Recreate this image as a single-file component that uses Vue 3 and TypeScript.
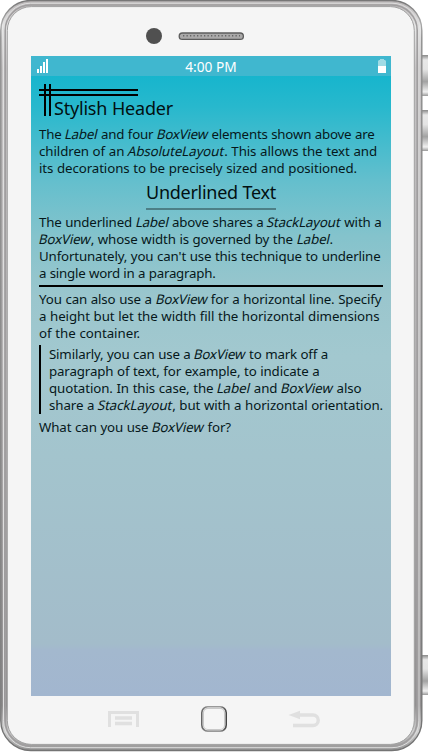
<script setup lang="ts">
import { nextTick, onMounted, ref } from 'vue'

interface Line { text: string; width: number }

// Words between asterisks are type names and are set slanted.
const intro: Line[] = [
  { text: 'The *Label* and four *BoxView* elements shown above are', width: 335.5 },
  { text: 'children of an *AbsoluteLayout*. This allows the text and', width: 338 },
  { text: 'its decorations to be precisely sized and positioned.', width: 318 },
]
const underline: Line[] = [
  { text: 'The underlined *Label* above shares a *StackLayout* with a', width: 342.5 },
  { text: '*BoxView*, whose width is governed by the *Label*.', width: 294 },
  { text: "Unfortunately, you can't use this technique to underline", width: 341.5 },
  { text: 'a single word in a paragraph.', width: 176.5 },
]
const rule: Line[] = [
  { text: 'You can also use a *BoxView* for a horizontal line. Specify', width: 342.5 },
  { text: 'a height but let the width fill the horizontal dimensions', width: 340.5 },
  { text: 'of the container.', width: 101 },
]
const quote: Line[] = [
  { text: 'Similarly, you can use a *BoxView* to mark off a', width: 279 },
  { text: 'paragraph of text, for example, to indicate a', width: 270.5 },
  { text: 'quotation. In this case, the *Label* and *BoxView* also', width: 312.5 },
  { text: 'share a *StackLayout*, but with a horizontal orientation.', width: 334 },
]
const closing: Line[] = [{ text: 'What can you use *BoxView* for?', width: 192 }]

const parts = (text: string) =>
  text.split('*').map((value, i) => ({ value, italic: i % 2 === 1 })).filter(p => p.value)

const phone = ref<HTMLElement | null>(null)

// Spread the letters so that each line fills its measure.
function fit() {
  phone.value?.querySelectorAll<HTMLElement>('[data-width]').forEach(el => {
    el.style.letterSpacing = '0px'
    const count = el.textContent?.length ?? 1
    const gap = (Number(el.dataset.width) - el.getBoundingClientRect().width) / count
    el.style.letterSpacing = `${gap}px`
  })
}
onMounted(async () => {
  await nextTick()
  fit()
  document.fonts.ready.then(fit)
})
</script>

<template>
  <div ref="phone" class="stage">
    <svg class="frame" width="428" height="752" viewBox="0 0 428 752">
      <defs>
        <linearGradient id="key" x1="0" x2="0" y1="0" y2="1">
          <stop offset="0" stop-color="#888" /><stop offset=".12" stop-color="#e8e8e8" />
          <stop offset=".35" stop-color="#e4e4e4" /><stop offset=".65" stop-color="#a2a2a2" />
          <stop offset=".9" stop-color="#f0f0f0" /><stop offset="1" stop-color="#999" />
        </linearGradient>
        <linearGradient id="rim" x1="0" x2="0" y1="0" y2="1">
          <stop offset="0" stop-color="#777" /><stop offset=".03" stop-color="#aaa" />
          <stop offset=".05" stop-color="#8c8c8c" /><stop offset="1" stop-color="#747474" />
        </linearGradient>
        <linearGradient id="metal" x1="0" x2="0" y1="0" y2="1">
          <stop offset="0" stop-color="#b5b1b2" /><stop offset=".035" stop-color="#e8e8e8" />
          <stop offset=".09" stop-color="#c6c4c5" /><stop offset=".5" stop-color="#b2b0b1" />
          <stop offset=".94" stop-color="#929091" /><stop offset=".975" stop-color="#d0d0d0" />
          <stop offset="1" stop-color="#929292" />
        </linearGradient>
        <linearGradient id="home" x1="0" x2="1" y1="0" y2="0">
          <stop offset="0" stop-color="#666" /><stop offset=".25" stop-color="#999" />
          <stop offset=".75" stop-color="#999" /><stop offset="1" stop-color="#444" />
        </linearGradient>
      </defs>
      <rect x="420" y="55" width="12" height="41" rx="2" fill="url(#key)" />
      <rect x="420" y="110" width="12" height="41" rx="2" fill="url(#key)" />
      <rect x="420" y="655" width="12" height="40" rx="2" fill="url(#key)" />
      <rect x=".8" y=".5" width="421" height="750" rx="30" fill="url(#metal)" stroke="url(#rim)" stroke-width="1.4" />
      <rect x="3.5" y="3.2" width="415.5" height="744.5" rx="27" fill="none" stroke="#dedede" stroke-width="1" />
      <rect x="5.2" y="5" width="412" height="741" rx="25.5" fill="none" stroke="#a09e9f" stroke-width="1.6" />
      <rect x="7.3" y="6.6" width="407" height="737.8" rx="24" fill="#f5f5f5" stroke="#a0a0a0" stroke-width="1" />
      <circle cx="154" cy="36" r="8" fill="#505050" />
      <rect x="179.2" y="33" width="64.2" height="6.4" rx="3.2" fill="#aaa9a9" stroke="#5c5c5c" stroke-width="1.3" />
      <path d="M183 35.7h57" stroke="#666" stroke-width="1.5" stroke-dasharray="1.3 2.2" />
      <path d="M109.5 727v-14.5h28V727" fill="none" stroke="#e0e0e0" stroke-width="3" />
      <path d="M115 718h17M115 723.5h17" stroke="#e0e0e0" stroke-width="3.5" />
      <rect x="201.8" y="706.7" width="24.4" height="24.4" rx="6" fill="#f7f7f7" stroke="url(#home)" stroke-width="1.6" />
      <rect x="203.4" y="708.3" width="21.2" height="21.2" rx="4.5" fill="#f6f6f6" stroke="#c9c9c9" stroke-width="1.2" />
      <path d="M299 715h14a5.2 5.2 0 0 1 0 10.5h-20" fill="none" stroke="#e0e0e0" stroke-width="3.4" />
      <path d="M288.5 715l11.5-4.3v8.6z" fill="#e0e0e0" />
    </svg>
    <main class="screen">
      <header class="status">
        <svg class="signal" width="12" height="15" viewBox="0 0 12 15">
          <path d="M0 10h2v4H0zM3 7h2v7H3zM6 3h2v11H6zM9 0h2v14H9z" fill="#fff" />
        </svg>
        <span class="time">4:00 PM</span>
        <svg class="battery" width="8" height="14" viewBox="0 0 8 14">
          <path d="M0 7V2l1-1h1V0h4v1h1l1 1v5z" fill="#9fdbe5" /><path d="M0 7h8v7H0z" fill="#fff" />
        </svg>
      </header>
      <section class="content">
        <div class="stylish">
          <i class="bar across first" /><i class="bar across second" />
          <i class="bar down first" /><i class="bar down second" />
          <span class="line" data-width="119">Stylish Header</span>
        </div>
        <p class="intro">
          <span v-for="l in intro" :key="l.text" class="line" :data-width="l.width"><span v-for="(p, i) in parts(l.text)" :key="i" :class="{ italic: p.italic }">{{ p.value }}</span></span>
        </p>
        <div class="underlined"><span class="line" data-width="130">Underlined Text</span></div>
        <p>
          <span v-for="l in underline" :key="l.text" class="line" :data-width="l.width"><span v-for="(p, i) in parts(l.text)" :key="i" :class="{ italic: p.italic }">{{ p.value }}</span></span>
        </p>
        <hr>
        <p>
          <span v-for="l in rule" :key="l.text" class="line" :data-width="l.width"><span v-for="(p, i) in parts(l.text)" :key="i" :class="{ italic: p.italic }">{{ p.value }}</span></span>
        </p>
        <blockquote>
          <span v-for="l in quote" :key="l.text" class="line" :data-width="l.width"><span v-for="(p, i) in parts(l.text)" :key="i" :class="{ italic: p.italic }">{{ p.value }}</span></span>
        </blockquote>
        <p>
          <span v-for="l in closing" :key="l.text" class="line" :data-width="l.width"><span v-for="(p, i) in parts(l.text)" :key="i" :class="{ italic: p.italic }">{{ p.value }}</span></span>
        </p>
      </section>
    </main>
  </div>
</template>

<style>
body { background: #fff; overflow: hidden; }
</style>

<style scoped>
.stage {
  position: relative;
  box-sizing: border-box;
  width: 428px;
  height: 752px;
  padding: 56px 37px 56px 31px;
  font-family: "Noto Sans", "Open Sans", sans-serif;
  font-size: 13.3px;
  line-height: 17px;
  color: #06181b;
}
.frame { position: absolute; left: 0; top: 0; }
.screen {
  position: relative;
  width: 360px;
  height: 640px;
  background: linear-gradient(#17b5cd 20px, #27b8cd 50px, #64bfcd 125px, #84c3cc 180px, #9ac6cd 240px, #a2c8cf 300px, #a3c4cd 400px, #a3bcca 588px, #a3b8ce 594px, #a2b6cf 640px);
}
.status {
  display: grid;
  grid-template-columns: 1fr auto 1fr;
  box-sizing: border-box;
  height: 20px;
  padding: 3px 5px 0 6px;
  background: #40b7cf;
  color: #fff;
}
.time { margin-right: 1px; font-size: 13.7px; line-height: 15px; }
.battery { justify-self: end; }
.content { display: flex; flex-direction: column; padding: 8px 8px 0; }
p, blockquote { display: flex; flex-direction: column; align-items: flex-start; margin: 0; padding-top: 1px; }
.line { display: inline-block; height: 17px; white-space: pre; word-spacing: .3px; }
.italic { display: inline-block; transform: skewX(-13deg); }
.stylish {
  position: relative;
  box-sizing: border-box;
  height: 32px;
  padding: 12px 0 0 15px;
  font-size: 18px;
  color: #021012;
}
.stylish .line, .underlined .line { height: 25px; line-height: 25px; }
.bar { position: absolute; background: #000; }
.across { left: 0; width: 99px; height: 2px; }
.across.first { top: 5px; }
.across.second { top: 10px; }
.down { top: 0; width: 2px; height: 32px; }
.down.first { left: 5px; }
.down.second { left: 10px; }
.intro { margin-top: 9px; }
.underlined {
  align-self: center;
  height: 28px;
  margin: 3px 0 3px;
  border-bottom: 2px solid rgba(0, 0, 0, .34);
  font-size: 18px;
  color: #021012;
}
hr { align-self: stretch; height: 2px; margin: 3px 0; border: 0; background: #000; }
blockquote { margin: 3px 0 4px; padding-left: 8px; border-left: 2px solid #000; }
</style>
